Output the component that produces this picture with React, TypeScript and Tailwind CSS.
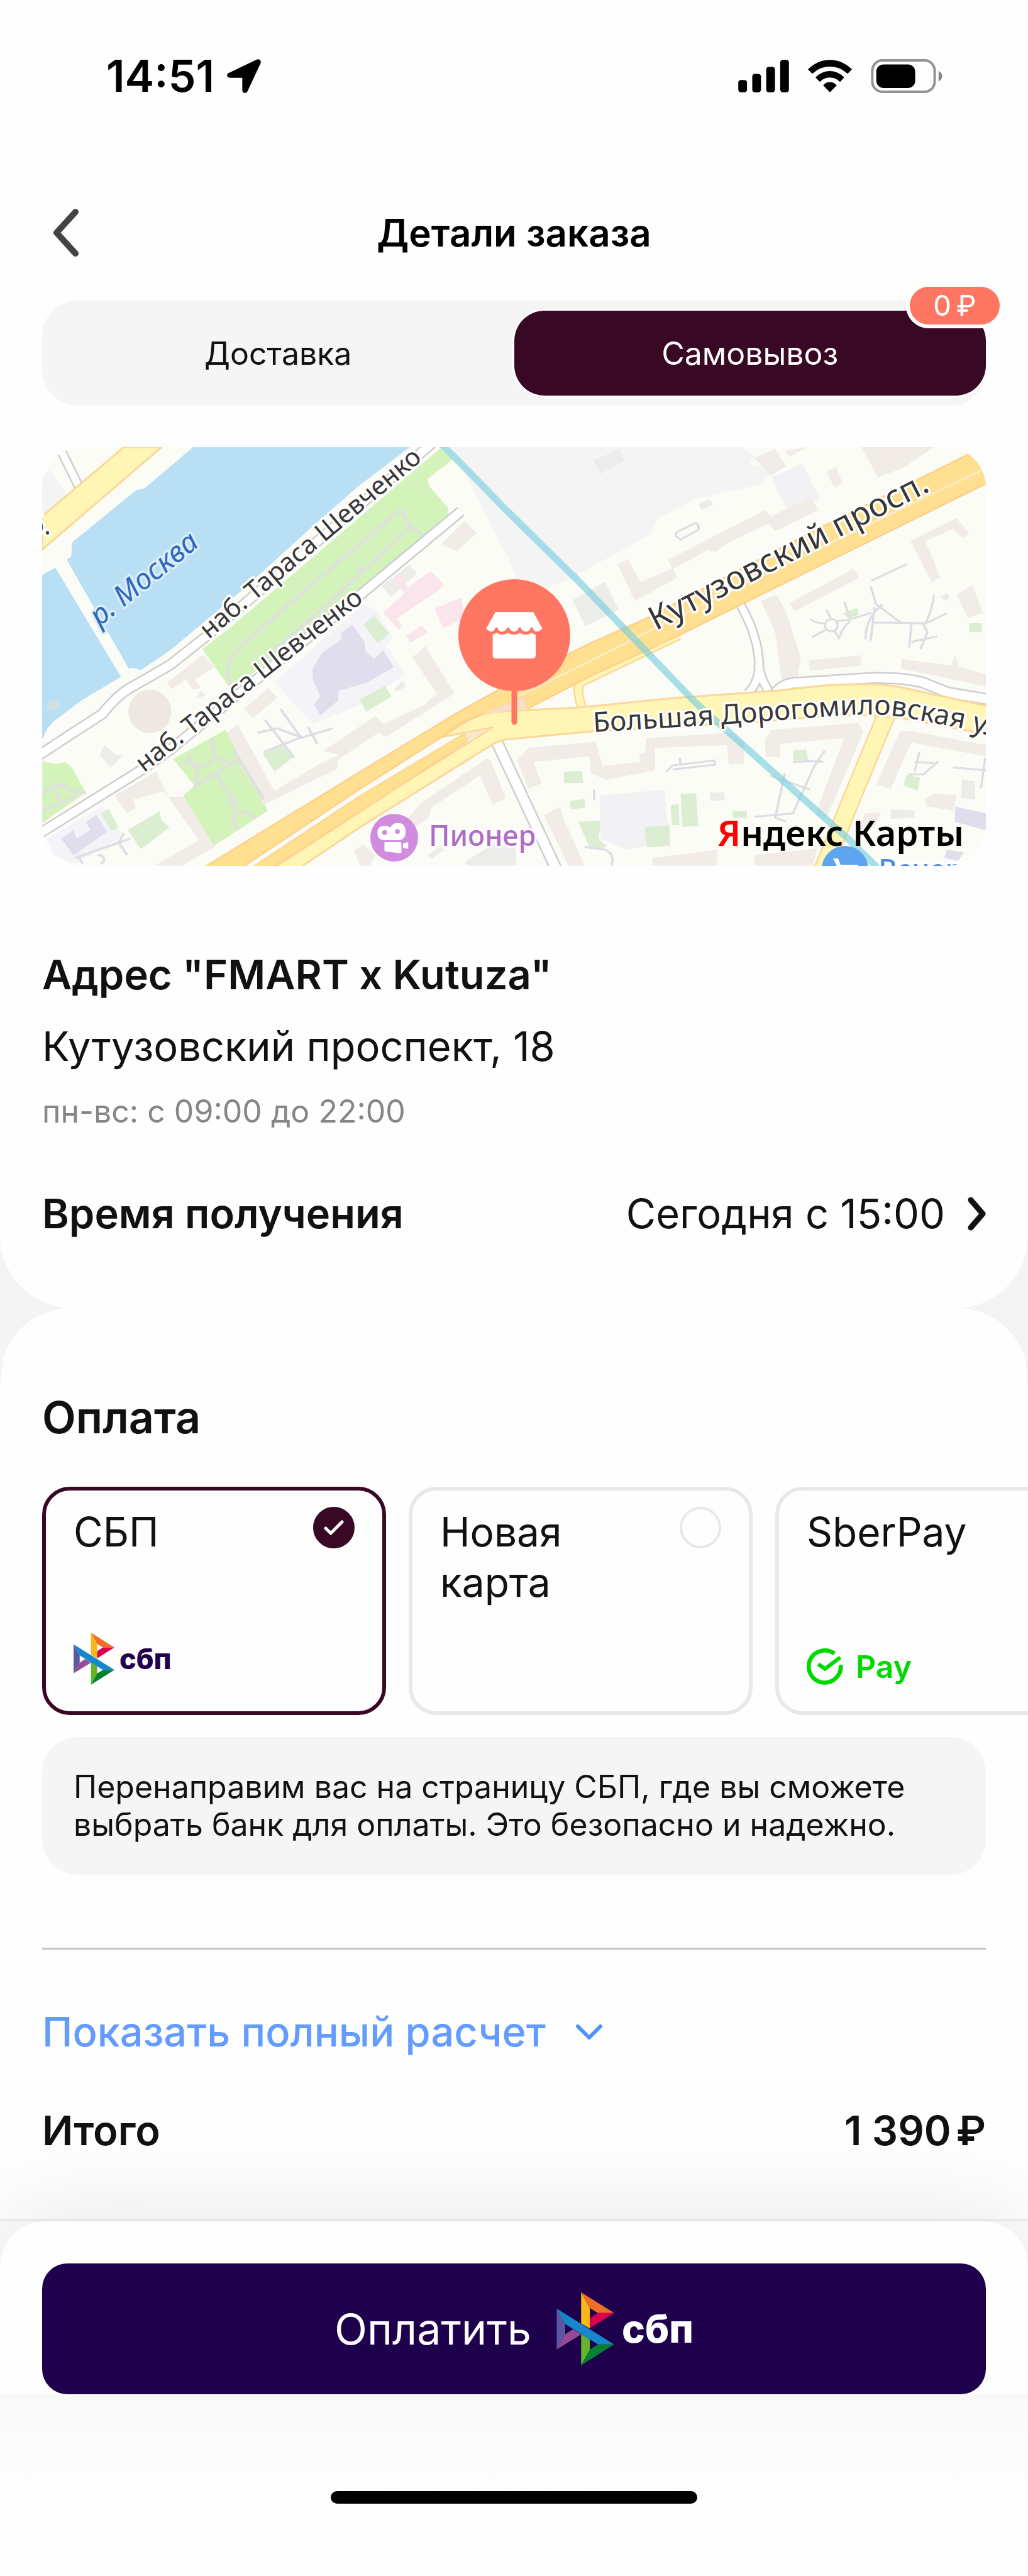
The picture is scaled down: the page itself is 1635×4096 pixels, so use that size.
import React, { useState } from 'react';

type DeliveryType = 'delivery' | 'pickup';
type PaymentId = 'sbp' | 'card' | 'sber';

// Simple filled shape of the map: [colour, points]
type MapShape = [string, string];

const WATER = '#b9dff5';
const PARK = '#d4f3bb';
const HOUSE = '#f1ece8';
const GREY = '#ececeb';
const LAWN = '#dbeed2';
const SCHOOL = '#e0deec';
const CLINIC = '#fbe5ec';

// Shapes of the left half of the map
const westShapes: MapShape[] = [
  ['#f4f4f5', '23,130 50,120 110,215 23,290'],
  [WATER, '515,36 1222,36 1050,180 900,325 680,545 560,655 440,765 345,836 318,828 305,830 103,440 118,428 120,378 330,190 355,185'],
  [WATER, '23,495 66,468 280,860 150,945 60,1020 38,1048 23,1085'],
  ['#f4f4f8', '780,880 1070,600 1110,620 1165,720 1145,750 1208,850 1060,960 905,1030'],
  ['#f4f4f8', '40,1440 220,1325 290,1430 130,1530 60,1500'],
  [PARK, '545,760 640,680 1300,60 1322,40 1362,80 1280,150 1284,175 1348,255 1345,280 1265,355 1040,560 780,790 638,905'],
  [PARK, '23,1162 60,1172 98,1166 120,1185 165,1275 23,1385'],
  [PARK, '450,1155 620,1050 680,1150 665,1170 760,1340 580,1468 483,1285 520,1250'],
  [HOUSE, '430,880 490,830 545,780 585,825 520,870 540,900 515,905 490,870 445,905'],
  [HOUSE, '680,975 760,900 790,935 710,1008'],
  [HOUSE, '625,1060 660,1030 780,1270 930,1170 990,1140 940,1125 1110,1000 1135,1030 1270,960 1310,920 1230,790 1272,750 1368,920 1145,1075 1120,1060 990,1155 985,1190 745,1320'],
  [HOUSE, '258,1285 395,1200 435,1290 485,1290 585,1470 480,1537 390,1537 535,1445 420,1270 320,1300 328,1330 300,1350'],
  [HOUSE, '1325,385 1400,300 1440,345 1375,410'],
  [HOUSE, '1215,1370 1255,1315 1470,1155 1485,1158 1535,1295 1492,1318 1450,1215 1290,1330 1285,1365 1240,1400'],
  [HOUSE, '1040,1485 1070,1460 1110,1500 1090,1537 1060,1537'],
  [GREY, '1130,535 1220,458 1245,490 1160,573'],
  [GREY, '210,1140 225,1105 260,1135 285,1145 245,1185'],
  [GREY, '525,940 540,910 556,925'],
  [GREY, '1280,1500 1320,1468 1335,1480 1295,1510'],
  [GREY, '1400,1525 1500,1455 1568,1470 1568,1537 1410,1537'],
  [GREY, '1170,905 1195,876 1210,892 1185,910'],
  [CLINIC, '1165,515 1195,485 1215,540 1290,480 1335,530 1315,550 1180,650 1195,675 1185,690 1135,630 1205,560'],
  [CLINIC, '1303,615 1390,575 1400,650 1330,685'],
  [CLINIC, '1210,712 1260,675 1280,700 1222,738'],
  [SCHOOL, '905,830 935,775 1000,725 995,705 1035,672 1075,735 1078,770 1105,795 1135,765 1170,825 1085,880 990,910 988,945 930,1000 910,960 930,930 905,870'],
  [SCHOOL, '85,1440 125,1410 135,1440 180,1410 165,1380 200,1355 235,1415 125,1500'],
  [LAWN, '1070,672 1105,640 1155,705 1118,740'],
  [LAWN, '1058,940 1140,892 1162,930 1080,985'],
  [LAWN, '742,1135 810,1108 840,1150 780,1200'],
  [LAWN, '302,1410 405,1342 412,1375 438,1400 345,1478'],
  [LAWN, '213,1350 240,1332 272,1400 250,1412'],
];

const westPaths = [
  'M1190 260 680 740 645 785Q625 800 628 850L642 900',
  'M1190 260 1225 320 1265 352M1225 320 1065 485 940 612 740 800M1050 465l18 22M935 605l12 18',
  'M575 1080 585 1150Q560 1185 530 1180Q505 1160 500 1140M470 1175Q505 1155 530 1190L522 1250 588 1207 640 1170 670 1165 745 1300M585 1150 640 1172M648 1125 670 1165M588 1207 640 1295Q660 1300 650 1325Q630 1310 640 1295M650 1340Q700 1340 715 1370M655 1335Q640 1370 660 1410',
  'M23 1280Q60 1240 100 1255Q125 1280 165 1275M60 1265 85 1300M23 1340 140 1285',
];

const westYards = [
  'M725 1060 790 1045 870 1078 970 1045M800 975 865 1075M750 1015 845 1150M745 1130 865 1078M890 1040 920 1100',
  'M130 1510 310 1440M270 1450 300 1500M290 1420 275 1450M205 1500a12 12 0 1 1 8 30M140 1500 155 1530',
];

// Shapes of the right half of the map
const eastShapes: MapShape[] = [
  ['#f4f4f4', '-160,36 750,36 785,70 770,95 845,120 800,170 600,222 480,295 460,350 190,520 60,560 20,440'],
  [GREY, '283,85 365,42 380,85 305,132'],
  ['#f2f2f4', '838,145 935,95 990,225 890,265'],
  [HOUSE, '785,75 850,42 885,105 835,138'],
  [HOUSE, '1120,36 1345,36 1250,110 1170,145'],
  [HOUSE, '880,50 950,36 895,70'],
  [HOUSE, '1010,125 1040,105 1060,165 1035,180'],
  [HOUSE, '515,440 820,262 835,285 960,215 985,262 850,338 830,310 710,375 665,412 640,405 530,475'],
  [HOUSE, '358,455 390,437 430,520 530,470 545,505 412,588'],
  [GREY, '218,585 318,518 362,620 258,678'],
  [GREY, '610,240 645,222 657,242 620,262'],
  [HOUSE, '895,595 1095,472 1112,505 910,625'],
  [HOUSE, '805,588 855,565 885,630 930,790 920,865 870,872 850,700'],
  [HOUSE, '955,800 1118,783 1118,820 958,838'],
  [HOUSE, '1245,795 1400,820 1410,780 1425,825 1508,850 1508,895 1242,830'],
  [HOUSE, '1272,372 1415,290 1455,345 1435,362 1405,330 1318,372 1365,505 1338,520'],
  [HOUSE, '1415,565 1465,532 1498,630 1452,650'],
  [HOUSE, '45,1160 80,1115 290,1093 312,1180 430,1165 425,1135 445,1130 447,1080 715,1060 752,1090 752,1170 705,1175 700,1105 475,1115 475,1195 320,1230 275,1205 270,1145 95,1165 122,1240 80,1262'],
  [HOUSE, '818,1085 838,1050 1110,1025 1125,1060 1010,1365 975,1355 1065,1080 865,1100 865,1148 820,1148'],
  [HOUSE, '1240,1055 1280,1055 1508,1105 1508,1145 1275,1095 1210,1262 1165,1245'],
  [HOUSE, '128,1355 180,1325 190,1370 255,1537 205,1537'],
  [HOUSE, '465,1510 670,1480 670,1537 470,1537'],
  [HOUSE, '785,1500 980,1475 970,1537 785,1537'],
  [HOUSE, '1315,1300 1350,1278 1415,1285 1405,1340 1325,1325'],
  [HOUSE, '1130,1350 1180,1345 1160,1400 1110,1410'],
  ['#f2f2f4', '302,1285 505,1265 520,1450 385,1480 305,1440'],
  [GREY, '645,1275 692,1275 692,1303 647,1305'],
  [GREY, '1210,1335 1285,1340 1285,1365 1210,1370'],
  [GREY, '1433,1228 1473,1235 1473,1300 1430,1295'],
  [GREY, '1366,572 1385,560 1395,576 1376,588'],
  [SCHOOL, '1412,1325 1508,1350 1508,1410 1410,1380'],
  [SCHOOL, '1385,1480 1440,1490 1420,1520 1378,1510'],
  [LAWN, '190,1200 248,1198 250,1240 192,1242'],
  [LAWN, '210,1305 255,1298 257,1330 212,1335'],
  [LAWN, '235,1380 305,1375 300,1440 325,1470 275,1480'],
  [LAWN, '443,1400 520,1392 523,1465 450,1472'],
  [LAWN, '555,1280 603,1277 610,1395 560,1398'],
  [LAWN, '523,1320 548,1315 552,1392 528,1392'],
  [LAWN, '905,1125 948,1120 953,1160 908,1160'],
  [LAWN, '1260,1210 1302,1222 1295,1268 1250,1250'],
  [LAWN, '1455,668 1495,668 1495,700 1455,700'],
  [LAWN, '1062,632 1105,612 1112,635 1080,652'],
  [LAWN, '715,1340 762,1342 762,1368 720,1365'],
];

const eastYards = [
  'M540 355a15 15 0 0 1 5-15L600 308q15 5 10 25L555 368Z',
  'M960 652Q975 670 1010 668M965 718 1010 690M1010 620 1025 655M1005 675a20 22 0 1 0 40 0a20 22 0 1 0-40 0M1035 695 1050 725M1045 660 1080 655 1150 630M1050 720Q1060 680 1085 660M1065 590 1085 655M1148 535 1165 600 1245 668M1185 600Q1130 650 1132 725M1160 610 1148 730M1155 665 1320 668 1385 632M1275 670 1268 755M1320 665Q1340 620 1345 565M1310 668 1325 700 1303 760M1275 735 1355 715M1150 515 1262 455',
  'M510 1200 530 1178 660 1160 662 1175 530 1192M552 1150 555 1175',
  'M1005 1125Q975 1170 960 1210L905 1350 785 1362M905 1165 995 1162M940 1160 1000 1165M880 1205 850 1365 885 1380M835 1215 960 1265',
  'M1300 1130 1285 1200M1265 1210 1312 1210 1360 1162M1285 1165 1345 1170M1405 1185 1508 1195M1505 1150 1492 1260',
  'M285 1265v38M340 1537Q350 1495 320 1480L255 1470',
];

const GreyRoad = ({ d, width }: { d: string; width: number }) => (
  <>
    <path d={d} stroke="#cdcdcd" strokeWidth={width + 5} />
    <path d={d} stroke="#ffffff" strokeWidth={width} />
  </>
);

const YellowRoad = ({ d, width }: { d: string; width: number }) => (
  <>
    <path d={d} stroke="#fdd79a" strokeWidth={width + 5} />
    <path d={d} stroke="#fff5b5" strokeWidth={width} />
  </>
);

function StoreMap() {
  return (
    <svg viewBox="0 0 1501 666" className="block h-auto w-full rounded-[64px]" role="img" aria-label="Карта">
      <rect width="1501" height="666" fill="#fbfcf6" />

      <g transform="matrix(.4877 0 0 .4433 -11.1 -16)">
        {westShapes.map(([fill, points]) => (
          <polygon key={points} points={points} fill={fill} />
        ))}
        <ellipse cx="374" cy="984" rx="70" ry="78" fill="#efe7e2" />
        <circle cx="60" cy="962" r="20" fill="#cfdfe2" />
        <g fill="none" stroke="#dde2da" strokeWidth="12">
          {westPaths.map((d) => (
            <path key={d} d={d} />
          ))}
        </g>
        <g fill="none" stroke="#dddde4" strokeWidth="8">
          {westYards.map((d) => (
            <path key={d} d={d} />
          ))}
        </g>
      </g>

      <g transform="matrix(.5098 0 0 .4433 732.6 -16)">
        {eastShapes.map(([fill, points]) => (
          <polygon key={points} points={points} fill={fill} />
        ))}
        <g fill="none" stroke="#dddde4" strokeWidth="7">
          {eastYards.map((d) => (
            <path key={d} d={d} />
          ))}
        </g>
      </g>

      {/* Roads */}
      <g fill="none" strokeLinejoin="round">
        <GreyRoad d="M30 5 58 62" width={11} />
        <GreyRoad d="M-10 493 62 446 96 424Q118 396 138 384L204 346 262 300 330 242 620-6" width={13} />
        <GreyRoad d="M-10 618 160 512 200 484 500 240 666 102" width={13} />
        <GreyRoad d="M720 462 822 680" width={15} />
        <GreyRoad d="M1108 246Q1134 290 1139 330Q1145 370 1122 392M1139 345Q1144 375 1162 396" width={11} />
        <GreyRoad d="M1160 400Q1172 378 1195 375L1320 367Q1370 366 1400 374L1440 390 1510 402" width={14} />
        <path d="M0 110 130 0H190L0 163Z" fill="#fff5b5" stroke="#fdd79a" strokeWidth="3" />
        <YellowRoad d="M860 418Q848 385 856 374L960 324 1013 299" width={11} />
        <YellowRoad d="M1345 420 1285 565 1262 622 1236 685" width={25} />
        <path
          d="M367 670 568 539 716 446 635 461 693 425Q720 421 733 420L855 414 1003 399 1171 387 1242 379Q1300 375 1340 378Q1360 380 1385 386L1505 412V457L1395 436Q1330 422 1242 428L1140 437 875 452 735 465Q720 470 714 474L503 606 408 670Z"
          fill="#fff5b5"
          stroke="#fdd79a"
          strokeWidth="3"
        />
        <path d="M258 668 503 518 661 422 726 386 865 315 962 272 1230 132 1390 53 1474 11 1505 30V56L1013 299 870 365 772 416 765 398 663 440 635 461 503 545 318 668Z" fill="#ffe091" stroke="#fdd28f" strokeWidth="3" />
        <path d="M334 668 503 556 672 455 677 467 568 539 503 581 366 668Z" fill="#ffe091" stroke="#fdd28f" strokeWidth="2" />
        <path d="M700 424 765 398 772 416Z" fill="#f7e0c8" />
        <path d="M672 455 712 448 677 467Z" fill="#f5e8cf" />
        <path d="M745 402 866 343 1000 275 1400 82 1500 34" stroke="#fbeacb" strokeWidth="3" />
        <path d="M636-4Q690 50 733 95L855 215 1038 405 1281 622 1330 670" stroke="#6fcbdd" strokeOpacity=".6" strokeWidth="11" />
      </g>

      {/* Labels */}
      <defs>
        <path id="dorogomilovskaya" d="M877 453 1079 441 1242 429Q1330 420 1385 432L1472 449 1540 468" />
      </defs>
      <g className="font-['Noto_Sans']" fill="#383838" stroke="#ffffff" strokeWidth="7" strokeLinejoin="round" paintOrder="stroke">
        <text fontSize="41" transform="translate(265 306) rotate(-40)">наб. Тараса Шевченко</text>
        <text fontSize="41" transform="translate(162 518) rotate(-38)">наб. Тараса Шевченко</text>
        <text fontSize="52" transform="translate(976 292) rotate(-27)">Кутузовский просп.</text>
        <text fontSize="44">
          <textPath href="#dorogomilovskaya">Большая Дорогомиловская ул.</textPath>
        </text>
        <text fontSize="41" x="14" y="139" textAnchor="end">б.</text>
        <text fontSize="46" fontStyle="italic" fill="#3068bd" stroke="#d9eefa" transform="translate(91 286) rotate(-39)">р. Москва</text>
        <text fontSize="45" fill="#b06cc4" fontWeight="500" x="615" y="634">Пионер</text>
        <text fontSize="45" fill="#4a8fe0" fontWeight="500" x="1330" y="688">Вечер</text>
      </g>

      {/* Cinema */}
      <circle cx="560" cy="621" r="38" fill="#d18ce0" />
      <g transform="matrix(.2317 0 0 .3015 503.2 192.6)" fill="#ffffff">
        <path d="M180 1358q22 0 38 10q15-25 50-25q55 0 55 46q0 45-55 45H180q-50 0-50-40q0-36 50-36Z" />
        <path d="M182 1444h105q8 0 8 10v40q0 10-10 9l-100-9q-7-1-7-8v-34q0-8 4-8ZM306 1452l35-8v36l-35-6Z" />
        <ellipse cx="179" cy="1393" rx="17" ry="13" fill="#d18ce0" />
        <ellipse cx="267" cy="1388" rx="17" ry="13" fill="#d18ce0" />
      </g>

      {/* Shop at the lower edge */}
      <circle cx="1277" cy="671" r="37" fill="#5ea4ef" />
      <path d="M1258 654h8l4 10h28l-3 12h-26" fill="#ffffff" />

      <text className="font-['Noto_Sans']" fontSize="56" fontWeight="600" x="1074" y="634">
        <tspan fill="#ff0000">Я</tspan>
        <tspan>ндекс Карты</tspan>
      </text>

      {/* Selected store marker */}
      <path d="M751 380V437" stroke="#ff7763" strokeWidth="9" strokeLinecap="round" />
      <circle cx="751" cy="299" r="89" fill="#ff7763" />
      <g transform="matrix(.2317 0 0 .3015 503.2 192.6)" fill="#ffffff">
        <path d="M940 231H1200L1262 318Q1240 334 1222 334T1199 318Q1189 303 1179 318Q1170 334 1148 334T1117 318Q1107 303 1097 318Q1088 334 1068 334T1037 318Q1027 303 1017 318Q1008 334 986 334T957 318Q947 303 937 318Q928 334 912 334T876 318Z" />
        <path d="M921 350Q935 348 947 340Q962 350 987 350T1027 340Q1042 350 1068 350T1107 340Q1122 350 1148 350T1188 340Q1200 348 1216 350V458Q1216 476 1194 476H943Q921 476 921 458Z" />
      </g>
    </svg>
  );
}

const SbpSign = ({ className }: { className: string }) => (
  <svg viewBox="212 192 394 500" className={className} aria-hidden="true">
    <polygon points="212,303 271,410 271,480 212,583" fill="#5b57a2" />
    <polygon points="271,480 323,445 380,480 212,583" fill="#984a95" />
    <polygon points="380,192 440,300 440,440 380,405" fill="#f9b81a" />
    <polygon points="380,192 606,333 495,333 440,300" fill="#ee6f26" />
    <polygon points="440,438 440,370 495,333 606,333" fill="#dc0050" />
    <polygon points="380,478 440,515 440,585 380,692" fill="#64b42d" />
    <polygon points="380,692 440,583 495,549 606,549" fill="#07812f" />
    <polygon points="212,303 606,549 495,549 271,410" fill="#1587ca" />
  </svg>
);

const SberPayLogo = () => (
  <span className="flex items-center gap-5 text-[#00d900]">
    <svg viewBox="68 86 252 254" className="size-[58px]" fill="none" stroke="currentColor" strokeWidth="29" aria-hidden="true">
      <path d="M260 123A112 112 0 1 0 304 200" />
      <path d="M147 196 195 228 301 149" strokeWidth="27" />
    </svg>
    <span className="text-[50px] leading-[58px] font-semibold">Pay</span>
  </span>
);

interface PaymentCardProps {
  title: string;
  selected: boolean;
  onSelect: () => void;
  children?: React.ReactNode;
}

function PaymentCard({ title, selected, onSelect, children }: PaymentCardProps) {
  return (
    <label
      className={`flex h-[363px] w-[547px] shrink-0 flex-col justify-between rounded-[44px] border-6 px-[44px] pt-[26px] pb-[42px] ${
        selected ? 'border-[#380825]' : 'border-[#e8e8e8]'
      }`}
    >
      <span className="flex items-start justify-between">
        <span className="w-[260px] text-[64px] leading-[80px]">{title}</span>
        <span className="grid size-[66px] place-items-center">
          <input
            type="radio"
            name="payment"
            checked={selected}
            onChange={onSelect}
            className="col-start-1 row-start-1 size-[66px] appearance-none rounded-full border-4 border-[#e8e8e8] checked:border-[#380825] checked:bg-[#380825]"
          />
          {selected && (
            <svg viewBox="0 0 32 24" className="col-start-1 row-start-1 w-[32px]" fill="none" stroke="#ffffff" strokeWidth="5" strokeLinecap="round" strokeLinejoin="round">
              <path d="M3 13 11 21 29 3" />
            </svg>
          )}
        </span>
      </span>
      {children}
    </label>
  );
}

function StatusBar() {
  return (
    <div className="flex h-[242px] items-center justify-between pr-[136px] pl-[169px] text-black">
      <div className="flex items-center gap-5">
        <span className="text-[70px] leading-[80px] font-semibold">14:51</span>
        <svg viewBox="879 80 233 234" className="size-[54px]" fill="currentColor" aria-hidden="true">
          <path d="M889 176 1083 83Q1098 78 1107 86Q1115 95 1110 109L1019 303Q1013 314 1002 314Q985 313 984 295V209H899Q881 208 879 192Q879 181 889 176Z" />
        </svg>
      </div>
      <div className="flex items-center gap-[30px]">
        <svg viewBox="82 80 350 223" className="h-[52px] w-[81px]" fill="currentColor" aria-hidden="true">
          <rect x="83" y="218" width="60" height="85" rx="18" />
          <rect x="179" y="176" width="60" height="127" rx="18" />
          <rect x="275" y="128" width="60" height="175" rx="18" />
          <rect x="371" y="80" width="60" height="223" rx="18" />
        </svg>
        <svg viewBox="563 80 303 223" className="h-[52px] w-[70px]" fill="currentColor" aria-hidden="true">
          <path d="M563 145Q630 80 714 80T866 145L836 175Q780 125 714 125T593 175Z" />
          <path d="M615 200Q660 157 714 157T813 200L784 231Q755 201 714 201T645 231Z" />
          <path d="M668 255Q688 233 714 233T761 255L714 303Z" />
        </svg>
        <svg viewBox="999 73 492 235" className="h-[54px] w-[114px]" aria-hidden="true">
          <rect x="1007" y="82" width="432" height="217" rx="70" fill="none" stroke="#929292" strokeWidth="17" />
          <rect x="1035" y="110" width="269" height="163" rx="50" />
          <path d="M1466 155Q1491 168 1491 191T1466 227Z" fill="#858585" />
        </svg>
      </div>
    </div>
  );
}

export default function App() {
  const [deliveryType, setDeliveryType] = useState<DeliveryType>('pickup');
  const [payment, setPayment] = useState<PaymentId>('sbp');

  const tabClass = (active: boolean) =>
    `relative flex-1 rounded-[48px] text-[50px] leading-[60px] ${active ? 'bg-[#380825] text-white ring-3 ring-white' : 'text-[#111111]'}`;

  return (
    <div className="min-h-screen bg-[#fefefe] font-[Inter,sans-serif] text-[#111111]">
      <StatusBar />

      <header className="grid h-[236px] grid-cols-[1fr_auto_1fr] items-center px-[84px] pt-5">
        <button type="button" aria-label="Назад" className="justify-self-start">
          <svg viewBox="0 0 42 76" className="h-[76px] w-[42px]" fill="none" stroke="#444444" strokeWidth="10" strokeLinecap="round" strokeLinejoin="round">
            <path d="M36 5 6 38 36 71" />
          </svg>
        </button>
        <h1 className="text-[60px] leading-[70px] font-semibold text-black">Детали заказа</h1>
      </header>

      <main className="bg-[#f4f4f4]">
        <section className="rounded-b-[115px] bg-[#fefefe] px-[67px] pb-[110px]">
          <div className="flex h-[167px] rounded-[56px] bg-[#f5f5f5] py-4">
            <button type="button" onClick={() => setDeliveryType('delivery')} className={tabClass(deliveryType === 'delivery')}>
              Доставка
            </button>
            <button type="button" onClick={() => setDeliveryType('pickup')} className={tabClass(deliveryType === 'pickup')}>
              Самовывоз
              <span className="absolute -top-[44px] -right-[28px] flex h-[72px] w-[155px] items-center justify-center gap-2 rounded-full border-6 border-[#fefefe] bg-[#ff7763] text-[45px] leading-[60px] text-white">
                <span>0</span>
                <span>₽</span>
              </span>
            </button>
          </div>

          <div className="mt-[66px]">
            <StoreMap />
          </div>

          <h2 className="mt-[133px] text-[65px] leading-[80px] font-semibold">Адрес "FMART x Kutuza"</h2>
          <p className="mt-[34px] text-[65px] leading-[80px]">Кутузовский проспект, 18</p>
          <p className="mt-[33px] text-[50px] leading-[60px] text-[#868686]">пн-вс: с 09:00 до 22:00</p>

          <div className="mt-[93px] flex items-center justify-between">
            <h2 className="text-[65px] leading-[80px] font-semibold">Время получения</h2>
            <button type="button" className="flex items-center gap-9 text-[65px] leading-[80px]">
              Сегодня с 15:00
              <svg viewBox="0 0 29 54" className="h-[54px] w-[29px]" fill="none" stroke="currentColor" strokeWidth="9" strokeLinecap="round" strokeLinejoin="round" aria-hidden="true">
                <path d="M5 5 24 27 5 49" />
              </svg>
            </button>
          </div>
        </section>

        <section>
          <div className="h-[86px] overflow-hidden">
            <div className="h-[160px] rounded-t-[112px] bg-[#fefefe]" />
          </div>
          <div className="bg-[#fefefe] px-[67px] pt-[48px] pb-[100px] [border-radius:7px_7px_0_0/60px_60px_0_0]">
            <h2 className="text-[70px] leading-[80px] font-semibold">Оплата</h2>

            <div className="-mr-[67px] mt-[70px] flex gap-9 overflow-x-auto [scrollbar-width:none]">
              <PaymentCard title="СБП" selected={payment === 'sbp'} onSelect={() => setPayment('sbp')}>
                <span className="flex items-center gap-2">
                  <SbpSign className="h-[83px] w-[65px]" />
                  <span className="text-[45px] leading-[60px] font-extrabold text-[#1f004d]">сбп</span>
                </span>
              </PaymentCard>
              <PaymentCard title="Новая карта" selected={payment === 'card'} onSelect={() => setPayment('card')} />
              <PaymentCard title="SberPay" selected={payment === 'sber'} onSelect={() => setPayment('sber')}>
                <SberPayLogo />
              </PaymentCard>
            </div>

            <p className="mt-[35px] rounded-[56px] bg-[#f5f5f5] px-[50px] pt-[49px] pb-[50px] text-[50px] leading-[60px]">
              Перенаправим вас на страницу СБП, где вы сможете выбрать банк для оплаты. Это безопасно и надежно.
            </p>

            <hr className="mt-[116px] border-t-3 border-[#c6c6c6]" />

            <button type="button" className="mt-[91px] flex items-center gap-12 text-[65px] leading-[80px] font-medium text-[#639bff]">
              Показать полный расчет
              <svg viewBox="0 0 42 24" className="w-[42px]" fill="none" stroke="#4d93f5" strokeWidth="6" strokeLinecap="round" strokeLinejoin="round" aria-hidden="true">
                <path d="M3 3 21 21 39 3" />
              </svg>
            </button>

            <div className="mt-[77px] flex items-center justify-between text-[65px] leading-[80px] font-semibold">
              <span>Итого</span>
              <span className="flex gap-2">
                <span>1 390</span>
                <span>₽</span>
              </span>
            </div>
          </div>
        </section>
      </main>

      <footer className="border-t-4 border-[#f0f0f0] bg-[#fcfcfc]">
        <div className="rounded-t-[72px] bg-[#fefefe] px-[67px] pt-[67px] shadow-[0_0_160px_rgba(0,0,0,0.1)]">
          <button type="button" className="flex h-[208px] w-full items-center justify-center gap-10 rounded-[40px] bg-[#1f004d] text-white">
            <span className="text-[68px] leading-[80px]">Оплатить</span>
            <span className="flex items-center gap-3">
              <SbpSign className="h-[116px] w-[92px]" />
              <span className="text-[62px] leading-[80px] font-extrabold">сбп</span>
            </span>
          </button>
        </div>
        <div className="bg-linear-to-b from-[#f9f9f9] to-[#fefefe] to-60% pt-[154px] pb-[113px]">
          <div className="mx-auto h-[20px] w-[583px] rounded-full bg-black" />
        </div>
      </footer>
    </div>
  );
}
